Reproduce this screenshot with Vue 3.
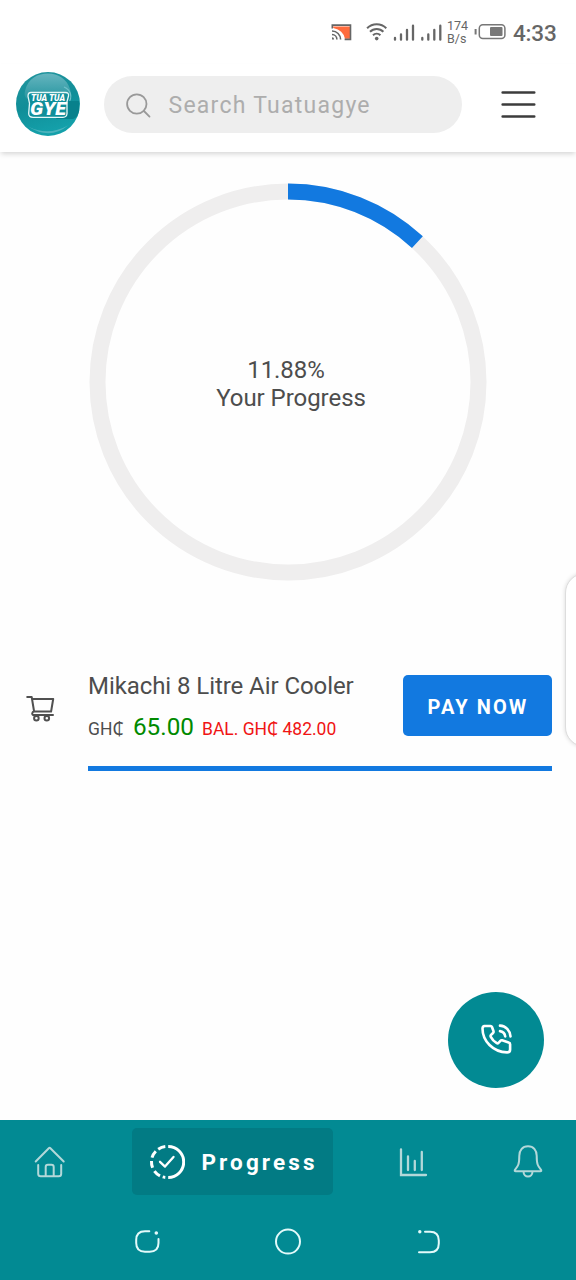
<script setup>
const percent = 11.88
const radius = 190.5
const circumference = 2 * Math.PI * radius
const dash = `${(circumference * percent) / 100} ${circumference}`
</script>

<template>
  <div class="screen">
    <div class="status">
      <svg class="status-icons" width="128" height="24" viewBox="330 20 128 24">
        <path d="M332 26.5H350v12.2h-5A13 13 0 0 0 334 28.3z" fill="#ff6b3d" />
        <path d="M332.3 28.4v-3.3h18.2v14.3H344.6" fill="none" stroke="#666" stroke-width="1.6" />
        <path d="M332 31a8.5 8.5 0 0 1 8.6 8.5M332 34.5a5 5 0 0 1 4.9 5" fill="none" stroke="#666" stroke-width="1.6" />
        <path d="M332 37.3a2.3 2.3 0 0 1 2.2 2.2H332z" fill="#666" />
        <g fill="none" stroke="#666" stroke-width="2">
          <path d="M367.1 28.2a13.5 13.5 0 0 1 19.2 0M370 31.8a9.3 9.3 0 0 1 13.4 0M373 35.2a5.3 5.3 0 0 1 7.4 0" />
          <path stroke-width="2.3" stroke-linecap="round" d="M395 38v1.7M401 34.5v5.2M407 30v9.7M413 25.7v14M422.3 38v1.7M428.3 34.5v5.2M434.3 30v9.7M440.3 25.7v14" />
        </g>
        <circle cx="376.7" cy="38.6" r="1.8" fill="#666" />
      </svg>
      <div class="rate"><span>174</span><span>B/s</span></div>
      <svg class="battery" width="34" height="20" viewBox="473 22 34 20">
        <path d="M475.6 29v5.5" stroke="#777" stroke-width="2" />
        <rect x="479.3" y="24.7" width="25.6" height="13.8" rx="3.5" fill="none" stroke="#777" stroke-width="1.5" />
        <rect x="490" y="27" width="12.5" height="9" rx="1" fill="#777" />
      </svg>
      <span class="clock">4:33</span>
    </div>

    <header class="header">
      <svg class="logo" width="64" height="64" viewBox="0 0 64 64">
        <defs>
          <linearGradient id="ball" x1="0" y1="0" x2="0.3" y2="1">
            <stop offset="0" stop-color="#23959e" />
            <stop offset="0.55" stop-color="#108e98" />
            <stop offset="1" stop-color="#14a0aa" />
          </linearGradient>
          <linearGradient id="shine" x1="0" y1="0" x2="0" y2="1">
            <stop offset="0" stop-color="#66b5bf" />
            <stop offset="1" stop-color="#2796a0" />
          </linearGradient>
        </defs>
        <circle cx="32" cy="32" r="32" fill="url(#ball)" />
        <path d="M9 19C12 6 22 1.5 32 1.5S51 7 54 17c2 6-2 10-6 10H13C9 27 8 23 9 19z" fill="url(#shine)" />
        <path d="M48 15c7 3 9 10 4 17" fill="none" stroke="#70c1c9" stroke-width="1.2" />
        <path d="M52 29h11v10c-1 5-3 7-6 8H40z" fill="#08818c" />
        <path d="M12 54.5q20 10 40-1-18 15-40 1z" fill="#4db3bd" />
        <path d="M15 20.5h34.5q3.500 0 3 3.500l-1.500 5.500v12q-.3 3.800-4 3.800H17q-4.500 0-4.300-4l.8-10-1.500-7q0-3.800 3-3.800z" fill="#108f9a" stroke="#e5f7f8" stroke-width="1.300" />
        <text x="15" y="28.700" textLength="34" lengthAdjust="spacingAndGlyphs" class="logo-small">TUA TUA</text>
        <text x="14" y="43.400" textLength="36" lengthAdjust="spacingAndGlyphs" class="logo-big">GYE</text>
      </svg>
      <div class="search">
        <svg width="28" height="28" viewBox="0 0 28 28" fill="none" stroke="#999" stroke-width="1.8" stroke-linecap="round">
          <circle cx="11.8" cy="12" r="9.7" /><path d="M18.9 19l5.6 5.6" />
        </svg>
        <span>Search Tuatuagye</span>
      </div>
      <svg class="menu" width="36" height="30" viewBox="0 0 36 30" stroke="#3c3c3c" stroke-width="2.7" stroke-linecap="round">
        <path d="M2.7 3.5h31.5M2.7 15.5h31.5M2.7 27.5h31.5" />
      </svg>
    </header>

    <main class="content">
      <div class="progress">
        <svg width="400" height="400" viewBox="-200 -200 400 400" fill="none" stroke-width="16">
          <circle :r="radius" stroke="#efeeee" />
          <circle :r="radius" stroke="#1279e0" :stroke-dasharray="dash" transform="rotate(-90)" />
        </svg>
        <div class="progress-label"><span class="percent">{{ percent }}%</span><span>Your Progress</span></div>
      </div>

      <section class="item">
        <svg class="cart" width="30" height="28" viewBox="0 0 30 28" fill="none" stroke="#505050" stroke-width="2" stroke-linejoin="round" stroke-linecap="round">
          <path d="M1.2 2h4.500l2.400 14.500h17L27.200 4H6.500M8.300 16.500c-2.500.3-3 3.600-.3 3.600h19" />
          <circle cx="10.4" cy="23.2" r="2.3" /><circle cx="20.8" cy="23.2" r="2.3" />
        </svg>
        <div class="details">
          <div class="row">
            <div>
              <div class="name">Mikachi 8 Litre Air Cooler</div>
              <div class="prices"><span class="currency">GH₵</span><span class="amount">65.00</span><span class="balance">BAL. GH₵ 482.00</span></div>
            </div>
            <button class="pay">PAY NOW</button>
          </div>
          <div class="bar"></div>
        </div>
      </section>
    </main>

    <div class="edge-panel"></div>

    <div class="call">
      <svg width="32" height="32" viewBox="0 0 32 32" fill="none" stroke="#fff" stroke-width="2.6" stroke-linecap="round" stroke-linejoin="round">
        <path d="M3.3 3h6.200q1.100 0 1.500 1l1.500 4.300q.3 1-.5 1.700l-2.200 2.200q-.5.7 0 1.600 2 4 6 6.400.9.500 1.600-.2l2-2.200q.7-.8 1.700-.5l6.500 2.100q1.500.4 1.500 1.800v5.200q0 3-3 3C12 29 1.500 18 1.500 5.500q0-2 1.800-2.500z" />
        <path d="M19 2.600c5.800.4 10 4.700 10.500 10.800M19 8.100c3 .4 4.700 2.100 5.200 5.300" />
      </svg>
    </div>

    <nav class="tabs">
      <svg class="home" width="32" height="34" viewBox="0 0 32 34" fill="none" stroke="#b3d8d9" stroke-width="2" stroke-linecap="round" stroke-linejoin="round">
        <path d="M1.700 16.500L14.800 3.200q.8-.8 1.600 0L29.700 16.500M4.200 20v8.800q0 2.500 2.500 2.500h18q2.500 0 2.500-2.500V20M11.700 31.300V22q0-2.200 2.200-2.200h3.600q2.200 0 2.200 2.200v9.300" />
      </svg>
      <div class="active">
        <svg width="36" height="36" viewBox="-18 -18 36 36" fill="none" stroke="#fff" stroke-width="3">
          <path d="M1.200-15.500A15.500 15.500 0 0 1 1.200 15.500" />
          <path d="M-1.700-15.400A15.500 15.500 0 0 0-8.800-12.800M-11.200-10.800A15.500 15.500 0 0 0-15-4.400M-15.500-1A15.500 15.500 0 0 0-14.400 5.800M-12.600 9.100A15.500 15.500 0 0 0-7 13.900M-4.300 14.900A15.500 15.500 0 0 0-1.700 15.400" />
          <path d="M-7-.2L-2 4.600 6.500-5.100" stroke-width="2.300" stroke-linecap="round" stroke-linejoin="round" />
        </svg>
        <span>Progress</span>
      </div>
      <svg class="chart" width="30" height="30" viewBox="0 0 30 30" fill="none" stroke="#b3d8d9" stroke-width="2.3" stroke-linecap="round">
        <path d="M2 2.300v25.700h25M9 9.500V23M15.800 14v9M22.800 5v18" />
      </svg>
      <svg class="bell" width="30" height="34" viewBox="0 0 30 34" fill="none" stroke="#b3d8d9" stroke-width="2" stroke-linejoin="round">
        <path d="M15 2.300c-5.800 0-8.700 4.400-8.700 9.400 0 8.600-1.100 10.200-4.200 14-.7.900-.4 1.600.5 1.600h24.800c.9 0 1.200-.7.500-1.600-3.100-3.800-4.200-5.400-4.200-14C23.700 6.700 20.800 2.300 15 2.300zM10.500 27.500c0 6.800 9 6.800 9 0" />
      </svg>
    </nav>

    <footer class="system">
      <svg width="320" height="30" viewBox="128 1227 320 30" fill="none" stroke="#e3fafa" stroke-width="2" stroke-linecap="round">
        <path d="M149.300 1231.200H145q-8.800 0-8.800 8.800v3q0 8.700 8.800 8.700h4.700q8.800 0 8.800-8.700v-4" />
        <circle cx="156.300" cy="1233" r="1.800" fill="#e3fafa" stroke="none" />
        <circle cx="288" cy="1241.600" r="12" />
        <path d="M425 1231.700h5q8.800 0 8.800 8.800v3q0 8.800-8.800 8.800h-11" />
        <circle cx="419.800" cy="1231.700" r="1.700" fill="#e3fafa" stroke="none" />
      </svg>
    </footer>
  </div>
</template>

<style>
body { margin: 0; }
</style>

<style scoped>
.screen { position: relative; width: 576px; height: 1280px; overflow: hidden; display: flex; flex-direction: column; background: #fefefe; font-family: Roboto, "Noto Sans", sans-serif; color: #4d4d4d; }
.screen * { box-sizing: border-box; }
svg { display: block; flex: none; }
.status { height: 64px; flex: none; display: flex; align-items: flex-start; padding-left: 330px; background: #fff; color: #666; }
.status-icons { margin-top: 20px; margin-right: -11px; }
.rate { width: 26px; padding-top: 20px; display: flex; flex-direction: column; font-size: 12.5px; line-height: 12.5px; }
.battery { margin-top: 22px; }
.clock { margin-left: 6px; margin-top: 19px; font-size: 22.5px; line-height: 28px; font-weight: 500; letter-spacing: -.2px; white-space: nowrap; }
.header { height: 88px; flex: none; display: flex; align-items: flex-start; padding: 8px 16px; background: #fff; box-shadow: 0 3px 5px -1px rgba(0, 0, 0, .16); }
.logo-small { font: italic 900 9px Roboto, sans-serif; fill: #fff; }
.logo-big { font: italic 900 19px Roboto, sans-serif; fill: #fff; }
.search { width: 358px; height: 57px; margin: 4px 0 0 24px; border-radius: 29px; background: #eee; display: flex; align-items: center; padding-left: 21px; font-size: 23px; letter-spacing: 1.25px; color: #adadad; }
.search svg { margin-top: 3px; }
.search span { margin: 2px 0 0 15.5px; white-space: nowrap; }
.menu { margin: 17px 0 0 38px; }
.content { height: 968px; flex: none; }
.progress { display: grid; width: 400px; height: 400px; margin: 30px auto 0; place-items: center; }
.progress > * { grid-area: 1 / 1; }
.progress-label { display: flex; flex-direction: column; align-items: center; font-size: 24px; line-height: 28px; letter-spacing: -.05px; margin-left: 6px; margin-top: 3px; }
.percent { margin-right: 10px; }
.item { display: flex; padding: 93px 24px 0 26px; }
.cart { margin-top: 20px; }
.details { width: 464px; margin-left: 32px; }
.row { display: flex; justify-content: space-between; height: 91px; }
.name { font-size: 24px; line-height: 28px; letter-spacing: -.07px; margin-top: -3px; white-space: nowrap; }
.prices { display: flex; align-items: baseline; margin-top: 12px; font-size: 17.5px; line-height: 30px; white-space: nowrap; }
.amount { margin-left: 9.5px; font-size: 24.3px; color: #008a00; }
.balance { margin-left: 8px; color: #f01414; }
.pay { width: 149px; height: 61px; padding: 2px 0 0 1px; border: 0; border-radius: 5px; background: #1279e0; color: #fff; font: 700 20px Roboto, sans-serif; letter-spacing: 2.1px; }
.bar { height: 5px; background: #1279e0; }
.edge-panel { position: absolute; left: 565px; top: 573px; width: 40px; height: 174px; border-radius: 20px; background: #fff; border: 1px solid #ddd; box-shadow: 0 0 4px rgba(0, 0, 0, .15); }
.call { position: absolute; left: 448px; top: 992px; width: 96px; height: 96px; border-radius: 50%; background: #028a93; display: flex; padding: 31px 0 0 33px; }
.tabs { height: 84px; flex: none; background: #028a93; display: flex; align-items: flex-start; padding-left: 34px; }
.home { margin-top: 25px; }
.active { width: 201px; height: 67px; margin: 8px 0 0 65.5px; border-radius: 5px; background: #027b84; display: flex; align-items: center; padding-left: 17px; color: #fff; font-size: 22.5px; font-weight: 700; letter-spacing: 3.1px; }
.active span { margin: 1px 0 0 17px; }
.chart { margin: 27px 0 0 66.5px; }
.bell { margin: 24px 0 0 84px; }
.system { height: 76px; flex: none; background: #028a93; padding: 23px 0 0 128px; }
</style>
